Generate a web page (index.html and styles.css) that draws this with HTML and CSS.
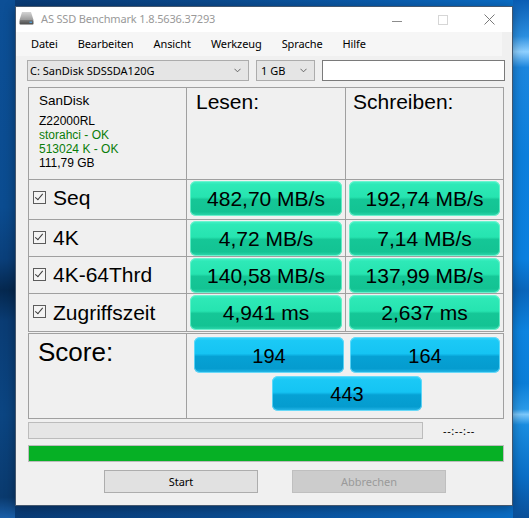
FILE: index.html
```html
<!DOCTYPE html>
<html lang="de">
<head>
<meta charset="utf-8">
<title>AS SSD Benchmark</title>
<link rel="stylesheet" href="styles.css">
</head>
<body>
<div class="desktop">
  <div class="window">
    <header class="titlebar">
      <svg class="app-icon" viewBox="0 0 15 14" aria-hidden="true">
        <defs>
          <linearGradient id="driveTop" x1="0" y1="0" x2="0" y2="1">
            <stop offset="0" stop-color="#d4d4d4"/>
            <stop offset="1" stop-color="#9a9a9a"/>
          </linearGradient>
          <linearGradient id="driveFront" x1="0" y1="0" x2="0" y2="1">
            <stop offset="0" stop-color="#7a7a7a"/>
            <stop offset="1" stop-color="#4a4a4a"/>
          </linearGradient>
        </defs>
        <path d="M3 1 H12 L14.5 9 H0.5 Z" fill="url(#driveTop)"/>
        <rect x="0.5" y="9" width="14" height="4.5" rx="0.8" fill="url(#driveFront)"/>
        <rect x="10.5" y="10.6" width="2.5" height="1.3" fill="#4fa3e0"/>
      </svg>
      <span class="title">AS SSD Benchmark 1.8.5636.37293</span>
      <div class="caption">
        <span class="cap">
          <svg width="10" height="10" viewBox="0 0 10 10"><path d="M0 6.5 H10" stroke="#8c8c8c" stroke-width="1"/></svg>
        </span>
        <span class="cap">
          <svg width="10" height="10" viewBox="0 0 10 10"><rect x="0.5" y="0.5" width="9" height="9" fill="none" stroke="#d6d6d6" stroke-width="1"/></svg>
        </span>
        <span class="cap">
          <svg width="11" height="11" viewBox="0 0 11 11"><path d="M0.5 0.5 L10.5 10.5 M10.5 0.5 L0.5 10.5" stroke="#7a7a7a" stroke-width="1"/></svg>
        </span>
      </div>
    </header>

    <nav class="menubar">
      <span>Datei</span>
      <span>Bearbeiten</span>
      <span>Ansicht</span>
      <span>Werkzeug</span>
      <span>Sprache</span>
      <span>Hilfe</span>
    </nav>

    <div class="toolbar">
      <div class="combo combo-drive">
        <span>C: SanDisk SDSSDA120G</span>
        <svg class="chevron" viewBox="0 0 8 5"><path d="M0.5 0.5 L4 4 L7.5 0.5" fill="none" stroke="#555" stroke-width="1"/></svg>
      </div>
      <div class="combo combo-size">
        <span>1 GB</span>
        <svg class="chevron" viewBox="0 0 8 5"><path d="M0.5 0.5 L4 4 L7.5 0.5" fill="none" stroke="#555" stroke-width="1"/></svg>
      </div>
      <div class="textbox"></div>
    </div>

    <section class="results">
      <div class="cell drive-info">
        <div class="vendor">SanDisk</div>
        <div class="line">Z22000RL</div>
        <div class="line ok">storahci - OK</div>
        <div class="line ok">513024 K - OK</div>
        <div class="line">111,79 GB</div>
      </div>
      <div class="cell head head-read">Lesen:</div>
      <div class="cell head head-write">Schreiben:</div>

      <div class="cell label row-seq"><span class="check"></span>Seq</div>
      <div class="cell row-seq"><div class="pill green">482,70 MB/s</div></div>
      <div class="cell row-seq"><div class="pill green">192,74 MB/s</div></div>

      <div class="cell label"><span class="check"></span>4K</div>
      <div class="cell"><div class="pill green">4,72 MB/s</div></div>
      <div class="cell"><div class="pill green">7,14 MB/s</div></div>

      <div class="cell label"><span class="check"></span>4K-64Thrd</div>
      <div class="cell"><div class="pill green">140,58 MB/s</div></div>
      <div class="cell"><div class="pill green">137,99 MB/s</div></div>

      <div class="cell label"><span class="check"></span>Zugriffszeit</div>
      <div class="cell"><div class="pill green">4,941 ms</div></div>
      <div class="cell"><div class="pill green">2,637 ms</div></div>
    </section>

    <section class="score">
      <div class="cell score-label">Score:</div>
      <div class="cell score-values">
        <div class="score-pair">
          <div class="pill blue">194</div>
          <div class="pill blue">164</div>
        </div>
        <div class="pill blue total">443</div>
      </div>
    </section>

    <div class="progress-row">
      <div class="progress"></div>
      <span class="elapsed">--:--:--</span>
    </div>
    <div class="overall"></div>

    <div class="actions">
      <button class="btn" type="button">Start</button>
      <button class="btn" type="button" disabled>Abbrechen</button>
    </div>
  </div>
</div>
</body>
</html>
```

FILE: styles.css
```css
* {
  box-sizing: border-box;
}

html,
body {
  margin: 0;
  padding: 0;
}

body {
  width: 529px;
  height: 518px;
  overflow: hidden;
  font-family: "Noto Sans", "DejaVu Sans", sans-serif;
  background:
    linear-gradient(180deg, #0c4f96 0%, #0b4c90 40%, #0a3f7a 50%, #05284f 56%, #0a3c74 62%, #0b4582 80%, #0a3a6e 96%, #1a5ea8 100%) left top / 15px 100% no-repeat,
    linear-gradient(180deg, #0a5db4 0%, #2b8fe0 7%, #8fd0ff 10%, #1c86de 13%, #0c7fdc 30%, #0b80df 50%, #0a66bb 56%, #0d84e0 64%, #0b7ed8 74%, #2b9ae8 79%, #7cc8fb 80%, #1a8de0 82%, #0a6ec6 92%, #0b4f98 100%) right top / 16px 100% no-repeat,
    linear-gradient(90deg, #093a74 0%, #0b4a8e 40%, #0a5eb0 75%, #0a6fc8 100%);
}

.desktop {
  padding: 6px 0 0 15px;
}

/* ---------- window frame ---------- */

.window {
  width: 498px;
  height: 500px;
  background: #f0f0f0;
  border: 1px solid #44576e;
  box-shadow: 0 2px 10px rgba(0, 0, 0, 0.35);
  display: flex;
  flex-direction: column;
}

.titlebar {
  height: 25px;
  background: #ffffff;
  display: flex;
  align-items: flex-start;
}

.app-icon {
  width: 15px;
  height: 14px;
  margin: 4px 0 0 3px;
  flex: none;
}

.title {
  margin-left: 7px;
  font-size: 11px;
  line-height: 23px;
  letter-spacing: -0.15px;
  color: #999999;
  white-space: nowrap;
}

.caption {
  margin-left: auto;
  display: flex;
}

.cap {
  width: 46px;
  height: 25px;
  display: flex;
  align-items: center;
  justify-content: center;
}

/* ---------- menu ---------- */

.menubar {
  height: 24px;
  margin-right: 10px;
  padding-left: 15px;
  background: #f6f6f6;
  display: flex;
  gap: 20px;
  font-size: 11px;
  line-height: 24px;
  letter-spacing: -0.1px;
  color: #000;
}

/* ---------- drive / size selection ---------- */

.toolbar {
  height: 21px;
  margin: 4px 7px 0 11px;
  display: flex;
  gap: 7px;
  font-size: 11px;
}

.combo {
  height: 21px;
  background: #e5e5e5;
  border: 1px solid #acacac;
  display: flex;
  align-items: center;
  padding: 0 7px 0 2px;
  line-height: 19px;
}

.combo span {
  flex: 1;
  white-space: nowrap;
}

.combo-drive {
  width: 222px;
}

.combo-size {
  width: 59px;
  padding-left: 4px;
}

.chevron {
  width: 7px;
  height: 5px;
  flex: none;
}

.textbox {
  width: 183px;
  height: 21px;
  background: #ffffff;
  border: 1px solid #7a7a7a;
}

/* ---------- result table ---------- */

.results,
.score {
  margin: 6px 8px 0 12px;
  display: grid;
  grid-template-columns: 157px 158px 157px;
  gap: 1px;
  padding: 1px;
  background: #a0a0a0;
  font-family: "Liberation Sans", Arial, sans-serif;
}

.results {
  grid-template-rows: 91px 39px 36px 36px 37px;
}

.cell {
  background: #f0f0f0;
  display: flex;
  align-items: center;
  min-width: 0;
}

.row-seq {
  padding-bottom: 3px;
}

.drive-info {
  flex-direction: column;
  align-items: flex-start;
  padding: 5px 0 0 10px;
  color: #000;
}

.vendor {
  font-size: 13.5px;
  line-height: 16px;
  margin-bottom: 5px;
}

.line {
  font-size: 12px;
  line-height: 14px;
}

.line.ok {
  color: #0a7d0a;
}

.head {
  align-items: flex-start;
  padding: 2px 0 0 9px;
  font-size: 21px;
  line-height: 24px;
}

.head-write {
  padding-left: 7px;
}

.label {
  padding-left: 4px;
  font-size: 21px;
  gap: 7px;
}

.check {
  width: 13px;
  height: 13px;
  flex: none;
  border: 1px solid #5c5c5c;
  background: #f4f4f4;
  position: relative;
  margin-bottom: 2px;
}

.check::after {
  content: "";
  position: absolute;
  left: 3px;
  top: 0px;
  width: 3px;
  height: 7px;
  border: solid #3a3a3a;
  border-width: 0 1.5px 1.5px 0;
  transform: rotate(40deg);
}

.pill {
  height: 35px;
  flex: 1;
  margin: 0 3px;
  border-radius: 6px;
  text-align: center;
  color: #000;
  font-size: 21px;
  line-height: 34px;
  padding-top: 1px;
  white-space: nowrap;
}

.green {
  background: linear-gradient(180deg, #46f2c8 0%, #2ee9b7 10%, #26e4b0 46%, #1fd6a4 49%, #15c797 53%, #13c393 88%, #26d2a6 96%, #63e6c6 100%);
  box-shadow: inset 0 0 0 1px rgba(120, 245, 210, 0.75);
}

.blue {
  background: linear-gradient(180deg, #3ad4fa 0%, #1bc9f6 10%, #15c4f3 46%, #0eb3e5 50%, #06a1d4 54%, #059ccf 88%, #1eb1e2 96%, #6ad8f7 100%);
  box-shadow: inset 0 0 0 1px rgba(110, 220, 250, 0.8);
}

/* ---------- score ---------- */

.score {
  margin-top: 1px;
  grid-template-columns: 157px 1fr;
  grid-template-rows: 84px;
}

.score-label {
  align-items: flex-start;
  padding: 3px 0 0 9px;
  font-size: 26px;
}

.score-values {
  flex-direction: column;
  align-items: center;
  gap: 3px;
  padding: 3px 0 0 4px;
  justify-content: flex-start;
}

.score-pair {
  display: flex;
  gap: 6px;
}

.score-pair .pill,
.score .total {
  flex: none;
  width: 150px;
  margin: 0;
  height: 36px;
  line-height: 36px;
  font-size: 20px;
}

.score .total {
  height: 35px;
  line-height: 35px;
}

/* ---------- progress ---------- */

.progress-row {
  margin: 3px 8px 0 12px;
  height: 17px;
  display: flex;
  align-items: center;
}

.progress {
  width: 395px;
  height: 17px;
  background: #e6e6e6;
  border: 1px solid #bcbcbc;
}

.elapsed {
  margin-left: 20px;
  font-size: 11px;
  letter-spacing: 0.6px;
  color: #000;
}

.overall {
  margin: 6px 8px 0 12px;
  height: 17px;
  background: #06b025;
  border: 1px solid #bcbcbc;
}

/* ---------- buttons ---------- */

.actions {
  margin: 8px 0 0 88px;
  display: flex;
  gap: 34px;
}

.btn {
  width: 154px;
  height: 23px;
  background: #e1e1e1;
  border: 1px solid #adadad;
  border-radius: 0;
  font-family: "Noto Sans", "DejaVu Sans", sans-serif;
  font-size: 11px;
  color: #000;
  padding: 0;
}

.btn:disabled {
  background: #cccccc;
  border-color: #bfbfbf;
  color: #9a9a9a;
}
```
